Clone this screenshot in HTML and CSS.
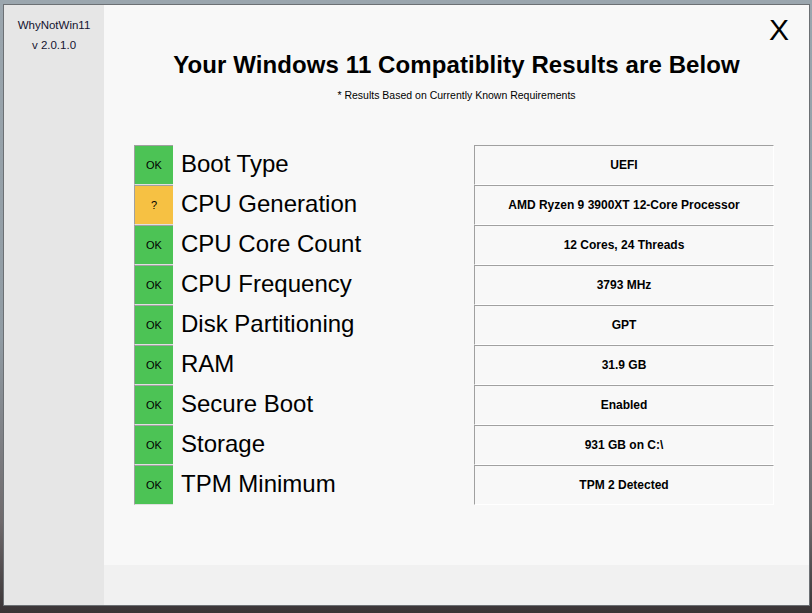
FILE: index.html
```html
<!DOCTYPE html>
<html lang="en">
<head>
    <meta charset="UTF-8">
    <title>WhyNotWin11</title>
    <link rel="stylesheet" href="styles.css">
</head>
<body>
    <div class="window">
        <!-- left sidebar -->
        <div class="sidebar">
            <div>WhyNotWin11</div>
            <div>v 2.0.1.0</div>
        </div>

        <div class="main">
            <div class="content">
                <div class="topbar">
                    <span class="close">X</span>
                </div>
                <h1 class="title">Your Windows 11 Compatiblity Results are Below</h1>
                <div class="subtitle">* Results Based on Currently Known Requirements</div>

                <div class="results" id="results"></div>
            </div>
            <div class="footer"></div>
        </div>
    </div>

    <script>
        const checks = [
            { status: "ok", name: "Boot Type", value: "UEFI" },
            { status: "warn", name: "CPU Generation", value: "AMD Ryzen 9 3900XT 12-Core Processor" },
            { status: "ok", name: "CPU Core Count", value: "12 Cores, 24 Threads" },
            { status: "ok", name: "CPU Frequency", value: "3793 MHz" },
            { status: "ok", name: "Disk Partitioning", value: "GPT" },
            { status: "ok", name: "RAM", value: "31.9 GB" },
            { status: "ok", name: "Secure Boot", value: "Enabled" },
            { status: "ok", name: "Storage", value: "931 GB on C:\\" },
            { status: "ok", name: "TPM Minimum", value: "TPM 2 Detected" }
        ];

        const container = document.getElementById("results");
        checks.forEach(check => {
            const row = document.createElement("div");
            row.className = "row";
            row.innerHTML = `
                <div class="status ${check.status}">${check.status === "ok" ? "OK" : "?"}</div>
                <div class="name">${check.name}</div>
                <div class="value">${check.value}</div>
            `;
            container.appendChild(row);
        });
    </script>
</body>
</html>
```

FILE: styles.css
```css
/* desktop behind the window */
body {
    margin: 0;
    padding: 4px 0 0 3px;
    height: 613px;
    box-sizing: border-box;
    overflow: hidden;
    font-family: "Liberation Sans", Arial, sans-serif;
    background: linear-gradient(180deg, #9ba6ae 0%, #919ca4 55%, #6f6a6c 85%, #3a3436 100%);
}

.window {
    width: 807px;
    height: 602px;
    box-sizing: border-box;
    border: 1px solid #6c7074;
    display: flex;
}

/* sidebar with app name */
.sidebar {
    width: 100px;
    background-color: #e6e6e6;
    text-align: center;
    font-size: 11.5px;
    color: #141430;
    padding-top: 10px;
    line-height: 20px;
}

.main {
    flex: 1;
    display: flex;
    flex-direction: column;
}

.content {
    flex: 1;
    background-color: #f8f8f8;
}

.footer {
    height: 40px;
    background-color: #f1f1f1;
}

.topbar {
    height: 38px;
    display: flex;
    justify-content: flex-end;
    padding-right: 20px;
}

.close {
    font-size: 30px;
    line-height: 50px;
    color: #000;
}

.title {
    margin: 8px 0 0;
    text-align: center;
    font-size: 24px;
    font-weight: bold;
    color: #000;
    letter-spacing: 0.1px;
}

.subtitle {
    margin-top: 10px;
    text-align: center;
    font-size: 10.5px;
    color: #000;
}

/* result rows */
.results {
    margin: 44px 0 0 30px;
    width: 640px;
}

.row {
    display: flex;
    height: 40px;
}

.status {
    width: 39px;
    box-sizing: border-box;
    border-top: 1px solid #a0a0a0;
    border-left: 1px solid #a0a0a0;
    border-bottom: 1px solid #e0e0e0;
    display: flex;
    align-items: center;
    justify-content: center;
    font-size: 11px;
    color: #000;
}

.status.ok {
    background-color: #4cc355;
}

.status.warn {
    background-color: #f6c143;
}

.name {
    flex: 1;
    padding-left: 8px;
    font-size: 24px;
    line-height: 38px;
    color: #000;
}

.value {
    width: 300px;
    box-sizing: border-box;
    border-top: 1px solid #a0a0a0;
    border-left: 1px solid #a0a0a0;
    border-right: 1px solid #ffffff;
    border-bottom: 1px solid #ffffff;
    display: flex;
    align-items: center;
    justify-content: center;
    font-size: 12px;
    font-weight: bold;
    color: #000;
}
```
